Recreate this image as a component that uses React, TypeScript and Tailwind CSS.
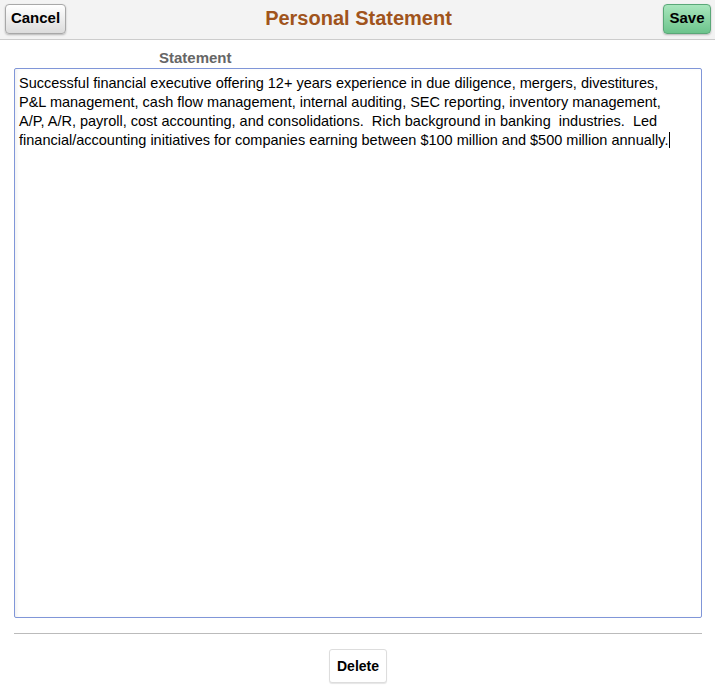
export default function App() {
  const lines = [
    "Successful financial executive offering 12+ years experience in due diligence, mergers, divestitures,",
    "P&L management, cash flow management, internal auditing, SEC reporting, inventory management,",
    "A/P, A/R, payroll, cost accounting, and consolidations.  Rich background in banking  industries.  Led",
    "financial/accounting initiatives for companies earning between $100 million and $500 million annually.",
  ];

  return (
    <div className="h-[687px] w-[715px] bg-white font-['Liberation_Sans',Arial,sans-serif] text-black">
      {/* Header bar */}
      <div className="flex h-10 items-center justify-between border-b border-[#cccccc] bg-[#f3f3f3] px-[5px] pb-[2px]">
        <button className="h-[30px] w-[61px] rounded-[4px] border border-[#a8a8a8] bg-gradient-to-b from-white to-[#dcdcdc] text-[15px] font-bold shadow-[0_1px_2px_rgba(0,0,0,0.25)]">
          Cancel
        </button>
        <h1 className="pr-[12px] pb-[1px] text-[20px] font-bold text-[#a0541c]">Personal Statement</h1>
        <button className="mr-[-1px] h-[30px] w-[48px] rounded-[4px] border border-[#5aa878] bg-gradient-to-b from-[#a8e6bd] to-[#6cc48c] text-[15px] font-bold shadow-[0_1px_2px_rgba(0,0,0,0.25)]">
          Save
        </button>
      </div>

      {/* Statement */}
      <div className="px-[14px] pr-[13px]">
        <div className="pl-[145px] pt-[9px] text-[15px] font-bold leading-[17px] text-[#666666]">Statement</div>
        <div className="mt-[2px] h-[550px] rounded-[2px] border border-[#8096d8] bg-white px-[4px] pt-[5px] text-[14.5px] leading-[19px] shadow-[inset_3px_0_4px_-2px_rgba(0,0,0,0.08)]">
          {lines.map((l, i) => (
            <div key={i} className="whitespace-pre">
              {l}
              {i === lines.length - 1 && (
                <span className="ml-[1px] inline-block h-[16px] w-px bg-black align-[-3px]" />
              )}
            </div>
          ))}
        </div>
        <div className="mt-[15px] border-t border-[#bbbbbb]" />
        <div className="flex justify-center pt-[15px]">
          <button className="h-[34px] w-[58px] rounded-[3px] border border-[#dddddd] bg-white text-[14px] font-bold shadow-[0_1px_1px_rgba(0,0,0,0.1)]">
            Delete
          </button>
        </div>
      </div>
    </div>
  );
}
